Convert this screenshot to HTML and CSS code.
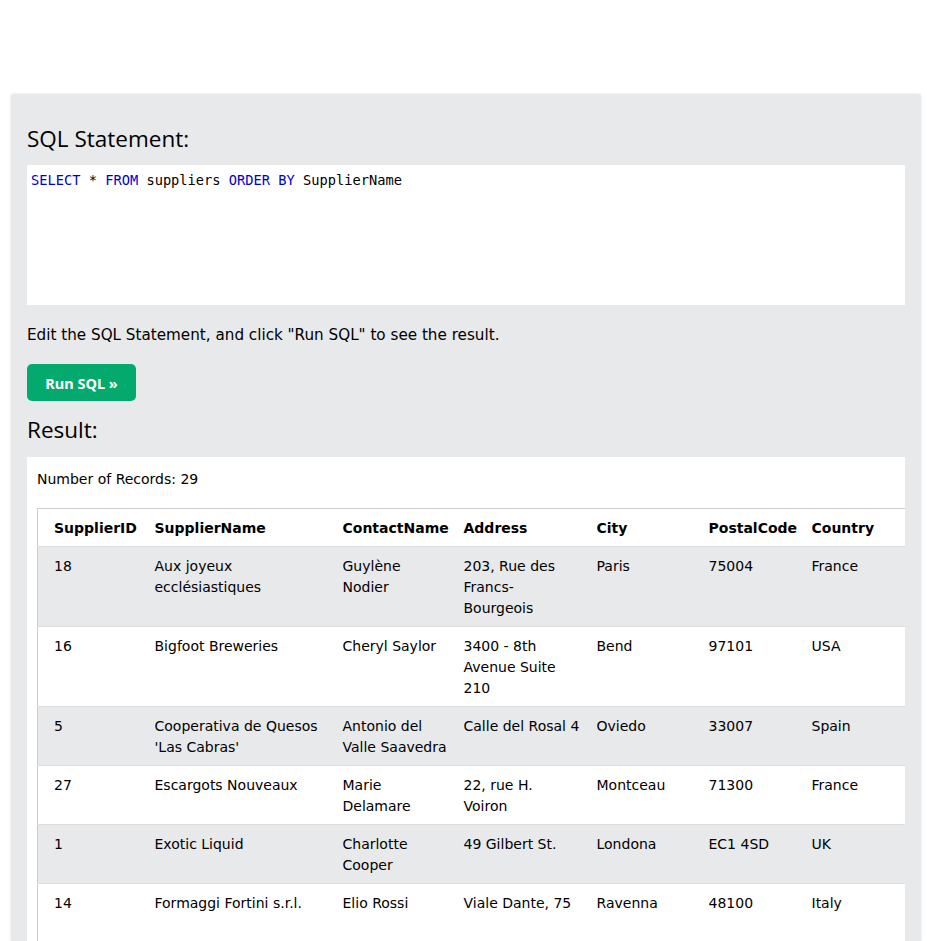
FILE: index.html
```html
<!DOCTYPE html>
<html lang="en">
<head>
<meta charset="utf-8">
<title>SQL Tryit</title>
<link rel="stylesheet" href="styles.css">
</head>
<body>
<div class="page">
  <div class="panel">
    <h3 class="heading">SQL Statement:</h3>
    <div class="code"><span class="kw">SELECT</span> * <span class="kw">FROM</span> suppliers <span class="kw">ORDER BY</span> SupplierName</div>
    <p class="hint">Edit the SQL Statement, and click "Run SQL" to see the result.</p>
    <button class="run">Run SQL &raquo;</button>
    <h3 class="heading result-h">Result:</h3>
    <div class="result">
      <div class="count">Number of Records: 29</div>
      <div class="table-wrap">
        <table class="data">
          <colgroup>
            <col class="c1"><col class="c2"><col class="c3"><col class="c4"><col class="c5"><col class="c6"><col class="c7"><col class="c8">
          </colgroup>
          <tr><th>SupplierID</th><th>SupplierName</th><th>ContactName</th><th>Address</th><th>City</th><th>PostalCode</th><th>Country</th><th>Phone</th></tr>
          <tr><td>18</td><td>Aux joyeux ecclésiastiques</td><td>Guylène Nodier</td><td>203, Rue des Francs-Bourgeois</td><td>Paris</td><td>75004</td><td>France</td><td>(1) 03.83.00.68</td></tr>
          <tr><td>16</td><td>Bigfoot Breweries</td><td>Cheryl Saylor</td><td>3400 - 8th Avenue Suite 210</td><td>Bend</td><td>97101</td><td>USA</td><td>(503) 555-9931</td></tr>
          <tr><td>5</td><td>Cooperativa de Quesos 'Las Cabras'</td><td>Antonio del Valle Saavedra</td><td>Calle del Rosal 4</td><td>Oviedo</td><td>33007</td><td>Spain</td><td>(98) 598 76 54</td></tr>
          <tr><td>27</td><td>Escargots Nouveaux</td><td>Marie Delamare</td><td>22, rue H. Voiron</td><td>Montceau</td><td>71300</td><td>France</td><td>85.57.00.07</td></tr>
          <tr><td>1</td><td>Exotic Liquid</td><td>Charlotte Cooper</td><td>49 Gilbert St.</td><td>Londona</td><td>EC1 4SD</td><td>UK</td><td>(171) 555-2222</td></tr>
          <tr><td>14</td><td>Formaggi Fortini s.r.l.</td><td>Elio Rossi</td><td>Viale Dante, 75</td><td>Ravenna</td><td>48100</td><td>Italy</td><td>(0544) 60323</td></tr>
        </table>
      </div>
    </div>
  </div>
</div>
</body>
</html>
```
FILE: styles.css
```css
html, body {
  margin: 0;
  padding: 0;
  background: #ffffff;
}
body {
  font-family: "DejaVu Sans", Verdana, sans-serif;
  font-size: 14px;
  color: #000000;
  overflow: hidden;
}
.page {
  padding: 94px 6px 0 11px;
}
.panel {
  background: #e7e9eb;
  border-radius: 3px;
  box-shadow: 0 0 3px rgba(0, 0, 0, 0.12);
  padding: 24px 16px 0 16px;
}
.heading {
  margin: 0;
  font-family: "Open Sans", "Noto Sans", sans-serif;
  font-weight: 400;
  font-size: 22.5px;
  line-height: 42px;
  color: #000;
}
.code {
  margin-top: 5px;
  background: #ffffff;
  height: 140px;
  box-sizing: border-box;
  padding: 6px 4px;
  font-family: "DejaVu Sans Mono", "Liberation Mono", monospace;
  font-size: 13.7px;
  line-height: 18px;
  color: #000;
}
.kw {
  color: #0000cd;
}
.hint {
  margin: 19px 0 0 0;
  font-size: 15.2px;
  line-height: 22px;
}
.run {
  display: block;
  margin-top: 18px;
  width: 109px;
  height: 37px;
  border: none;
  border-radius: 5px;
  background: #04aa6d;
  color: #ffffff;
  font-family: "Noto Sans", "Open Sans", sans-serif;
  font-weight: 700;
  font-size: 14.5px;
  padding: 0;
}
.result-h {
  margin-top: 8px;
}
.result {
  margin-top: 6px;
  background: #ffffff;
  padding: 12px 0 0 10px;
  overflow: hidden;
}
.count {
  line-height: 21px;
}
.table-wrap {
  margin-top: 18px;
  overflow: hidden;
}
.data {
  border-collapse: collapse;
  table-layout: fixed;
  width: 971px;
  border: 1px solid #cccccc;
}
.data col.c1 { width: 109px; }
.data col.c2 { width: 188px; }
.data col.c3 { width: 121px; }
.data col.c4 { width: 133px; }
.data col.c5 { width: 112px; }
.data col.c6 { width: 103px; }
.data col.c7 { width: 101px; }
.data col.c8 { width: 104px; }
.data th, .data td {
  text-align: left;
  vertical-align: top;
  padding: 9px 8px 7px 8px;
  line-height: 21px;
  border-bottom: 1px solid #dddddd;
}
.data th:first-child, .data td:first-child {
  padding-left: 16px;
}
.data th {
  font-weight: 700;
}
.data tr:nth-child(even) {
  background: #e7e9eb;
}
```
